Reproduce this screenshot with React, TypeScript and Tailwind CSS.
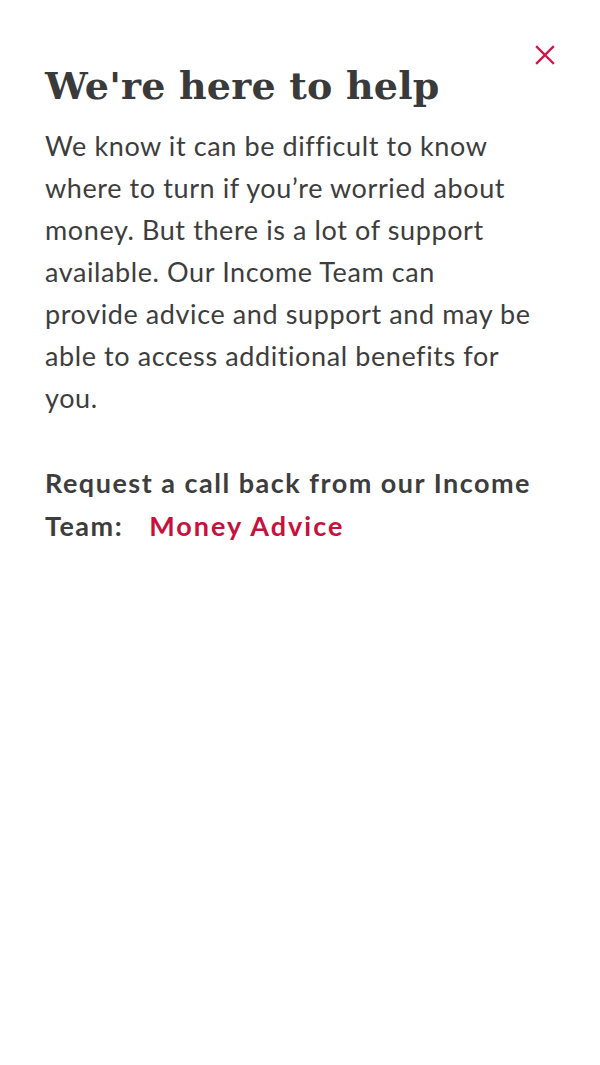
export default function App() {
  return (
    <div className="min-h-[1065px] w-full bg-white text-[#3d3d3d]">
      <div className="relative pl-[45px] pr-[30px] pt-[60px]">
        {/* close button */}
        <button className="absolute right-[44px] top-[44px] flex h-[22px] w-[22px] items-center justify-center text-[#d4154b]">
          <svg width="20" height="20" viewBox="0 0 20 20" fill="none" stroke="currentColor" strokeWidth="2.4" strokeLinecap="square">
            <path d="M2 2L18 18M18 2L2 18" />
          </svg>
        </button>

        <h1 className="font-['DejaVu_Serif',serif] text-[38px] font-bold leading-[52px] tracking-[0.2px] text-[#3a3a3a]">
          We're here to help
        </h1>

        <p className="mt-[13px] font-['Lato',sans-serif] text-[27px] leading-[42px] tracking-[0.6px]">
          We know it can be difficult to know
          <br />
          where to turn if you’re worried about
          <br />
          money. But there is a lot of support
          <br />
          available. Our Income Team can
          <br />
          provide advice and support and may be
          <br />
          able to access additional benefits for
          <br />
          you.
        </p>

        <p className="mt-[42px] font-['Lato',sans-serif] text-[27px] font-bold leading-[43px] tracking-[1.5px]">
          Request a call back from our Income
          <br />
          Team:
          <a href="#" className="ml-[26px] tracking-[2px] text-[#c8103e]">Money Advice</a>
        </p>
      </div>
    </div>
  );
}
